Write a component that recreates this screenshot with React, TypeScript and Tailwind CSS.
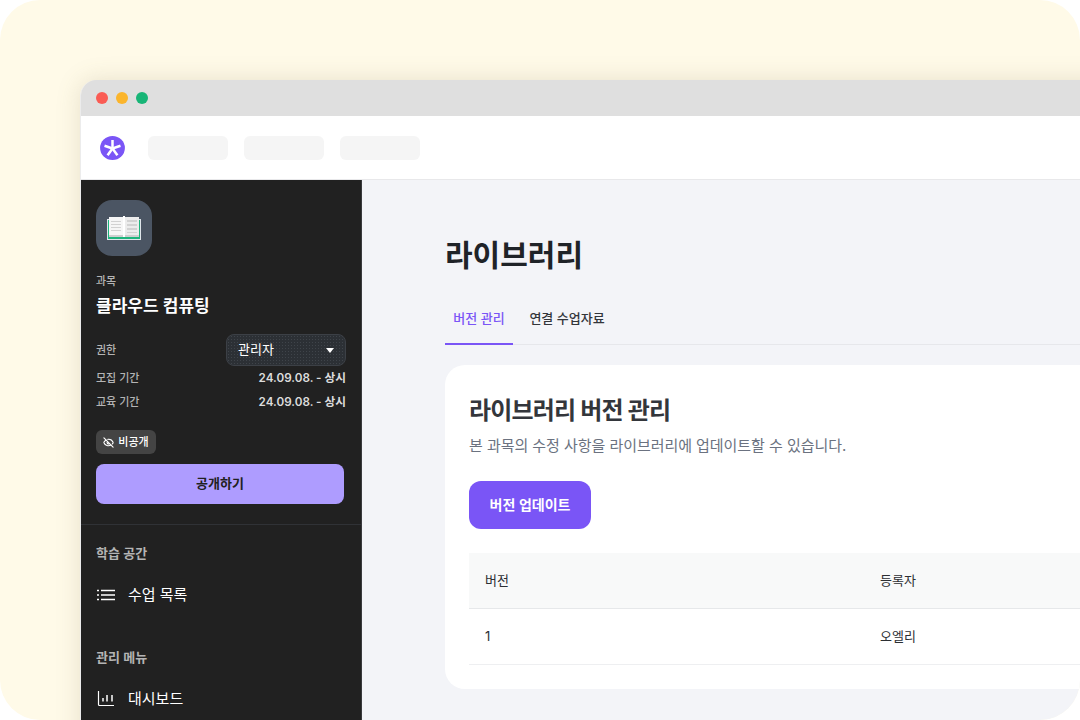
import React from 'react';
import {EyeOff} from 'lucide-react';

const font = "font-['Inter','Noto_Sans_CJK_KR',sans-serif]";

const Logo = () => (
  <svg width="25" height="24" viewBox="0 0 25 24" className="mr-[7px] shrink-0">
    <ellipse cx="12.5" cy="12" rx="12.4" ry="12" fill="#7a55f6" />
    <g stroke="#fff" strokeWidth="2.5" strokeLinecap="butt">
      <path d="M12.5 12.5V4" />
      <path d="M12.5 12.5L4.5 9.8" />
      <path d="M12.5 12.5L20.5 9.8" />
      <path d="M12.5 12.5L7.6 19.2" />
      <path d="M12.5 12.5L17.4 19.2" />
    </g>
  </svg>
);

const BookIcon = () => (
  <svg width="36" height="24" viewBox="0 0 36 24">
    <rect x="1" y="3" width="34" height="21" fill="#dfe5ea" />
    <rect x="2" y="4" width="32" height="19" fill="#1db47c" />
    <rect x="3" y="1" width="15" height="20" fill="#f6f6f6" />
    <rect x="18" y="1" width="15" height="20" fill="#ececec" />
    <rect x="3" y="19" width="30" height="2" fill="#cfcfcf" />
    <rect x="17" y="0" width="2" height="21" fill="#fff" />
    <g fill="#d2d2d2">
      <rect x="5" y="5" width="10" height="1" />
      <rect x="5" y="8" width="10" height="1" />
      <rect x="5" y="11" width="10" height="1" />
      <rect x="5" y="14" width="10" height="1" />
      <rect x="21" y="4" width="10" height="2" />
      <rect x="21" y="8" width="10" height="2" />
      <rect x="21" y="12" width="10" height="2" />
      <rect x="21" y="16" width="10" height="1" />
    </g>
  </svg>
);

const ListIcon = () => (
  <svg width="18" height="18" viewBox="0 0 18 18" fill="none" stroke="#fff" strokeWidth="1.4">
    <path d="M4 4.5H18M4 9H18M4 13.5H18" />
    <path d="M0 4.5H2M0 9H2M0 13.5H2" />
  </svg>
);

const ChartIcon = () => (
  <svg width="18" height="18" viewBox="0 0 18 18" fill="none" stroke="#fff" strokeWidth="1.2">
    <path d="M1.5 1V14.5A1 1 0 0 0 2.5 15.5H17" />
    <path d="M6 11.5V8M10 11.5V5M15 11.5V5" strokeWidth="1.5" />
  </svg>
);

const Dot = ({color}: {color: string}) => <span className={`h-3 w-3 rounded-full ${color}`} />;

const Skeleton = () => <div className="h-6 w-20 rounded-md bg-[#f5f5f5]" />;

const Sidebar = () => (
  <aside className="flex w-[281px] shrink-0 flex-col border-r border-[#3a3a3e] bg-[#212121]">
    <div className="flex h-[345px] shrink-0 flex-col border-b border-[#303236] px-[15px] pt-5">
      <div className="flex h-14 w-14 items-center justify-center rounded-2xl bg-[#4b5563]">
        <BookIcon />
      </div>
      <p className="mt-[15px] text-[11px] leading-[20px] font-medium text-[#b4b4b4]">과목</p>
      <h2 className="mt-[3px] text-[17px] leading-[24px] font-semibold text-white">클라우드 컴퓨팅</h2>
      <div className="mt-4 flex h-8 items-center justify-between">
        <span className="text-[11px] font-medium text-[#b4b4b4]">권한</span>
        <div className="flex h-8 w-[120px] items-center justify-between rounded-lg border border-[#3c4046] bg-[#2c3035] bg-[radial-gradient(#3f444a_1px,transparent_1px)] bg-[length:3px_3px] px-[11px] text-[13px] text-white">
          관리자
          <span className="h-0 w-0 border-x-[4px] border-t-[5px] border-x-transparent border-t-white" />
        </div>
      </div>
      <div className="mt-px flex h-[22px] items-center justify-between">
        <span className="text-[11px] font-medium text-[#b4b4b4]">모집 기간</span>
        <span className="pt-px text-[11.7px] font-semibold text-[#dcdcdc]">24.09.08. - 상시</span>
      </div>
      <div className="mt-0.5 flex h-[22px] items-center justify-between">
        <span className="text-[11px] font-medium text-[#b4b4b4]">교육 기간</span>
        <span className="pt-px text-[11.7px] font-semibold text-[#dcdcdc]">24.09.08. - 상시</span>
      </div>
      <div className="mt-[17px] flex h-6 w-[60px] items-center justify-center gap-1 rounded-md bg-[#444444] text-[11px] font-medium text-white">
        <EyeOff size={11} strokeWidth={2.5} />
        비공개
      </div>
      <button className="mt-[10px] h-10 w-[248px] rounded-lg bg-[#ae9cff] text-[13px] font-semibold text-[#212121]">
        공개하기
      </button>
    </div>
    <div className="px-[15px] pt-5">
      <h3 className="text-[13px] leading-[16px] font-semibold text-[#b4b4b4]">학습 공간</h3>
      <div className="mt-[18px] flex h-8 items-center gap-[13px] pl-px text-[15px] text-white">
        <ListIcon />
        수업 목록
      </div>
      <h3 className="mt-[38px] text-[13px] leading-[16px] font-semibold text-[#b4b4b4]">관리 메뉴</h3>
      <div className="mt-[18px] flex h-8 items-center gap-[13px] pl-px text-[15px] text-white">
        <ChartIcon />
        대시보드
      </div>
    </div>
  </aside>
);

const Main = () => (
  <main className="min-w-0 flex-1 bg-[#f3f4f8] pt-[55px] pl-[83px]">
    <h1 className="text-[30px] leading-[40px] font-bold text-[#1f2328]">라이브러리</h1>
    <div className="mt-[21px] flex h-[49px] border-b border-[#e6e7eb] text-[13px] font-medium">
      <div className="-mb-px flex h-[49px] w-[68px] items-center justify-center border-b-2 border-[#7a55f6] pb-0.5 text-[#7a55f6]">
        버전 관리
      </div>
      <div className="ml-2 flex h-12 w-[92px] items-center justify-center pb-0.5 text-[#33363b]">연결 수업자료</div>
    </div>
    <section className="mt-5 h-[324px] w-[800px] rounded-[20px] bg-white px-6 pt-[26px]">
      <h2 className="text-[24px] leading-[40px] font-bold tracking-[-0.8px] text-[#33363b]">라이브러리 버전 관리</h2>
      <p className="mt-[3px] text-[15px] leading-[24px] tracking-[-0.05px] text-[#6b7280]">
        본 과목의 수정 사항을 라이브러리에 업데이트할 수 있습니다.
      </p>
      <button className="mt-[23px] h-12 w-[122px] rounded-xl bg-[#7a55f6] text-sm font-semibold text-white">
        버전 업데이트
      </button>
      <div className="mt-6 w-[700px] text-[13px] text-[#2c2f33]">
        <div className="flex h-14 items-center border-b border-[#e6e8ea] bg-[#f8f9f9] pl-4">
          <span className="w-[395px]">버전</span>
          <span>등록자</span>
        </div>
        <div className="flex h-14 items-center border-b border-[#eeeff1] pl-4">
          <span className="w-[395px]">1</span>
          <span>오엘리</span>
        </div>
      </div>
    </section>
  </main>
);

const App = () => (
  <div className={`h-[720px] w-[1080px] overflow-hidden bg-white ${font}`}>
    <div className="h-full w-full overflow-hidden rounded-[40px] bg-[#fffae8] pt-20 pl-20">
      <div className="flex h-[760px] w-[1120px] flex-col overflow-hidden rounded-tl-2xl border-l border-[#ececec] shadow-[0_0_24px_rgba(120,110,70,0.18)]">
        <div className="flex h-9 shrink-0 items-center gap-2 bg-[#dfdfdf] pl-[15px]">
          <Dot color="bg-[#fa5c54]" />
          <Dot color="bg-[#fbb52c]" />
          <Dot color="bg-[#18b577]" />
        </div>
        <header className="flex h-16 shrink-0 items-center gap-4 border-b border-[#e8e8ea] bg-white pl-[19px]">
          <Logo />
          <Skeleton />
          <Skeleton />
          <Skeleton />
        </header>
        <div className="flex min-h-0 flex-1">
          <Sidebar />
          <Main />
        </div>
      </div>
    </div>
  </div>
);

export default App;
